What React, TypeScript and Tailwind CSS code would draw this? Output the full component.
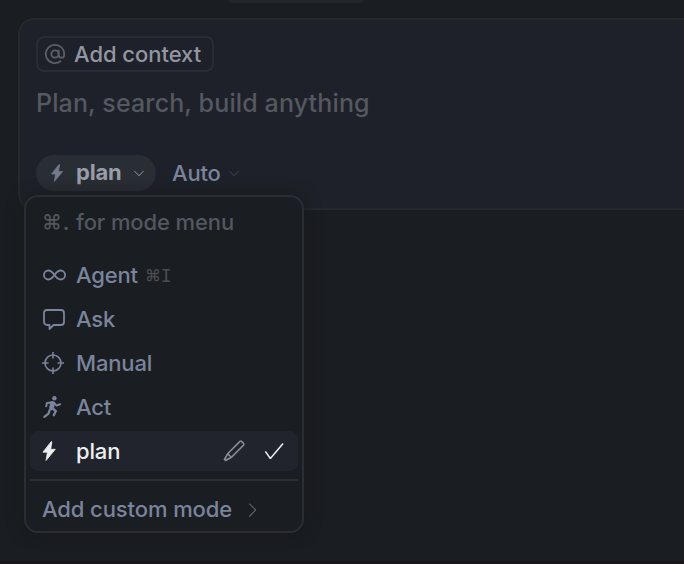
import type { ReactNode } from 'react';
import { AtSign } from 'lucide-react';
import { VscCheck, VscChevronDown, VscChevronRight, VscEdit } from 'react-icons/vsc';

function BoltIcon({ className }: { className?: string }) {
  return (
    <svg viewBox="0 0 14 20" fill="currentColor" stroke="currentColor" strokeWidth="0.8" strokeLinejoin="round" className={className}>
      <path d="M9.3 .5 .9 11.2H5.4L4 19.5 13.300 8.300H8.700L9.900 .8Z" />
    </svg>
  );
}

function InfinityIcon() {
  return (
    <svg viewBox="0 0 24 12" fill="none" stroke="currentColor" strokeWidth="1.8" className="h-3 w-6">
      <path d="M12.500 6C10.500 3.200 9 1.500 6.400 1.500a4.500 4.500 0 0 0 0 9C9 10.500 10.500 8.800 12.500 6s3.500-4.500 6.100-4.500a4.500 4.500 0 0 1 0 9C16 10.500 14.500 8.800 12.500 6Z" />
    </svg>
  );
}

function ChatIcon() {
  return (
    <svg viewBox="0 0 22 21" fill="none" stroke="currentColor" strokeWidth="1.8" strokeLinejoin="round" className="ml-px h-[21px] w-[22px]">
      <path d="M4 1h14a3 3 0 0 1 3 3v9a3 3 0 0 1-3 3H10.500l-4 4v-4H4a3 3 0 0 1-3-3V4a3 3 0 0 1 3-3Z" />
    </svg>
  );
}

function TargetIcon() {
  return (
    <svg viewBox="0 0 22 22" fill="none" stroke="currentColor" strokeWidth="1.6" className="size-[22px]">
      <circle cx="11" cy="11" r="8" />
      <path d="M11 0v6.500M11 15.500v6.500M0 11h6.500M15.500 11h6.500" />
    </svg>
  );
}

function RunIcon() {
  return (
    <svg viewBox="0 0 19 22" fill="none" stroke="currentColor" strokeWidth="2" strokeLinecap="round" strokeLinejoin="round" className="ml-px h-[22px] w-[19px]">
      <circle cx="11.400" cy="2.200" r="2.200" fill="currentColor" stroke="none" />
      <path d="M9.500 6.200 4 6.900 3.200 10.200M11.200 6.800l2.300 2.800 3.600-1.400" />
      <path d="M9.500 7.500 8.600 11.800" strokeWidth="4.8" />
      <path d="M9 12l3.800 3-2 4.200M6.700 14 5.500 17.600 1.400 20.800" strokeWidth="2.300" />
    </svg>
  );
}

type Mode = {
  label: string;
  icon: ReactNode;
  shortcut?: string;
  active?: boolean;
};

const modes: Mode[] = [
  { label: 'Agent', icon: <InfinityIcon />, shortcut: 'I' },
  { label: 'Ask', icon: <ChatIcon /> },
  { label: 'Manual', icon: <TargetIcon /> },
  { label: 'Act', icon: <RunIcon /> },
  { label: 'plan', icon: <BoltIcon className="h-5 w-3.5" />, active: true },
];

function ModeMenu() {
  return (
    <div className="absolute left-[24px] top-[195px] flex h-[338px] w-[280px] flex-col rounded-[14px] border-2 border-[#2a2d33] bg-[#1a1d21] px-1 shadow-[0_0_16px_rgba(24,24,26,0.8)]">
      <div className="flex h-[50px] items-center whitespace-pre pl-3 text-[22px] tracking-[-0.12px] text-[#54575f]">
        <span className="mr-px text-[20px]">⌘</span>
        <span className="mr-px">.</span> for mode menu
      </div>
      <div className="mt-2 flex flex-col gap-1">
        {modes.map((mode) => (
          <div
            key={mode.label}
            className={`flex h-10 items-center rounded-lg pl-3 ${
              mode.active ? 'bg-[#21242c] text-[#eceef0]' : 'text-[#7a849c]'
            }`}
          >
            <span className="flex w-[34px] shrink-0 items-center">{mode.icon}</span>
            <span className="text-[22px] tracking-[-0.15px]">{mode.label}</span>
            {mode.shortcut && (
              <span className="ml-[7px] flex items-center text-[#4a4d54]">
                <span className="text-[16px]">⌘</span>
                <span className="font-['DejaVu_Sans_Mono',monospace] text-[18px]">{mode.shortcut}</span>
              </span>
            )}
            {mode.active && (
              <span className="ml-auto flex items-center gap-4 pr-3">
                <VscEdit className="size-6 text-[#8a8d95]" />
                <VscCheck className="size-6" />
              </span>
            )}
          </div>
        ))}
      </div>
      <div className="mt-2 h-0.5 shrink-0 bg-[#2a2d32]" />
      <div className="flex flex-1 items-center pl-3 pt-[7px] text-[22px] tracking-[-0.1px] text-[#7a849c]">
        Add custom mode
        <VscChevronRight className="ml-[9px] size-[22px] text-[#5d6068]" />
      </div>
    </div>
  );
}

export default function App() {
  return (
    <div className="relative flex h-screen flex-col overflow-hidden border-b-[3px] border-[#18151b] bg-[#1a1d21] font-[Inter,sans-serif] [font-weight:450]">
      <div className="ml-[228px] h-[3px] w-[136px] shrink-0 rounded-b-lg bg-[#22252a]" />

      {/* Prompt box */}
      <div className="-mr-5 ml-[18px] mt-[15px] flex h-[192px] shrink-0 flex-col items-start rounded-2xl border-2 border-[#25292e] bg-[#1e2129] pl-4 pt-4">
        <button className="flex h-9 w-[178px] items-center rounded-lg border-2 border-[#292c34] pl-1.5">
          <AtSign className="size-[22px] text-[#5b5e66]" strokeWidth={2} />
          <span className="ml-2 whitespace-nowrap text-[22px] tracking-[-0.04px] text-[#9297a3]">Add context</span>
        </button>
        <div className="mt-[13px] text-[25px] leading-9 tracking-[0.13px] text-[#555861]">Plan, search, build anything</div>
        <div className="mt-[34px] flex h-9 items-center">
          <button className="flex h-9 w-[120px] items-center rounded-full bg-[#292d34] pl-3.5 text-[#989da8]">
            <BoltIcon className="h-[18px] w-3.5 text-[#737b8b]" />
            <span className="ml-3 pb-0.5 text-[22px] font-bold tracking-[-0.2px]">plan</span>
            <VscChevronDown className="ml-[9px] size-4 text-[#858891]" />
          </button>
          <button className="ml-4 flex items-center text-[22px] tracking-[-0.2px] text-[#7a849c]">
            Auto
            <VscChevronDown className="ml-[5px] size-4 text-[#3c4048]" />
          </button>
        </div>
      </div>

      <ModeMenu />
    </div>
  );
}
